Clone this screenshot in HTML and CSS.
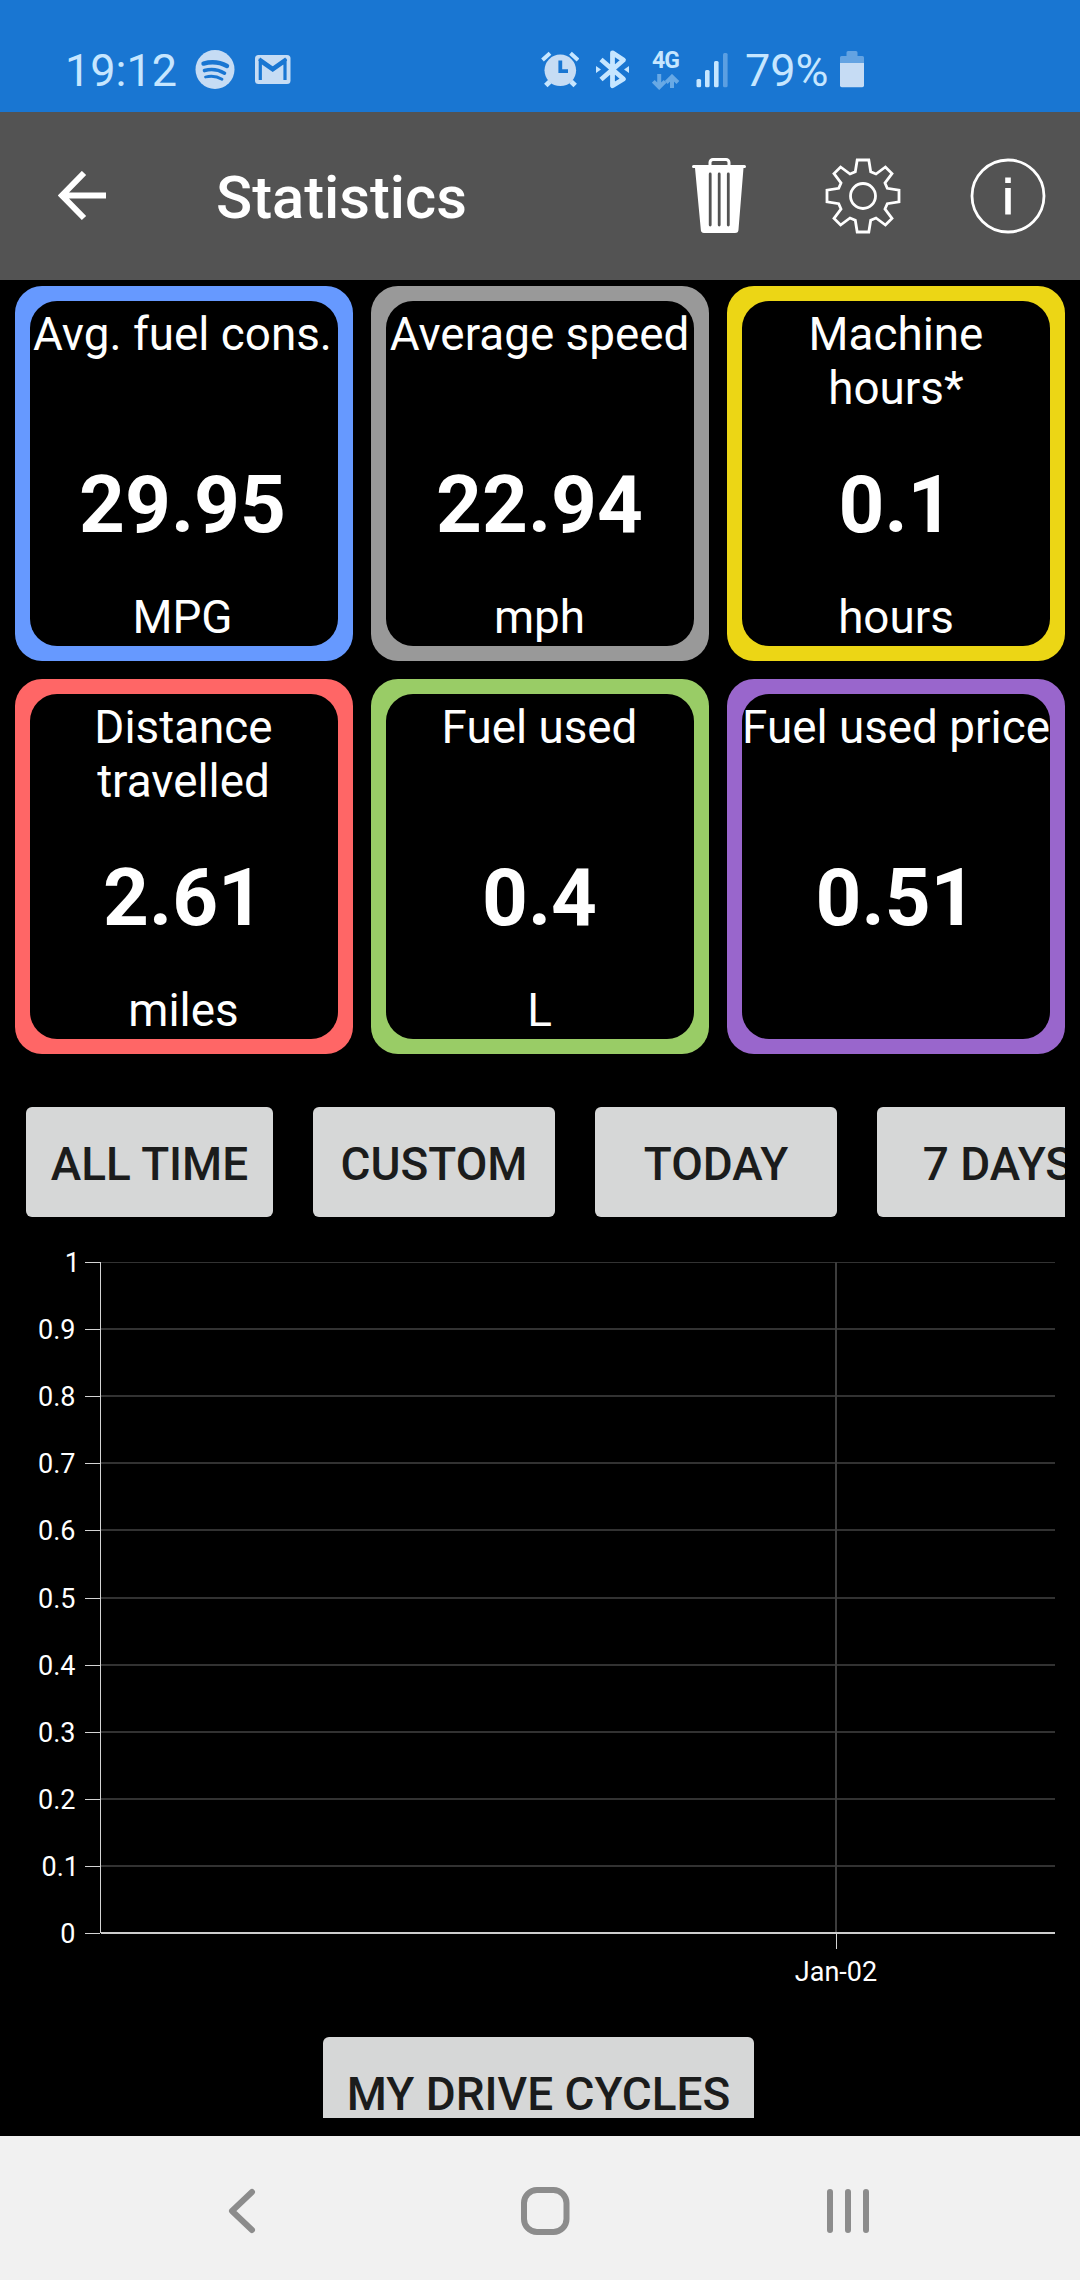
FILE: index.html
```html
<!DOCTYPE html>
<html lang="en">
<head>
<meta charset="utf-8">
<title>Statistics</title>
<link rel="stylesheet" href="styles.css">
</head>
<body>
<div class="screen">
  <div class="status">
    <span class="status-text time">19:12</span>
    <svg class="spotify" width="40" height="40" viewBox="0 0 40 40"><circle cx="20" cy="19.5" r="19.5" fill="#c6dcf4"/><g fill="none" stroke="#1976d2" stroke-linecap="round"><path d="M8.500 13.600Q21 10 32 16" stroke-width="4.400"/><path d="M9.500 20.600Q20 17.600 29.500 23.200" stroke-width="3.600"/><path d="M10.500 27Q19.500 24.800 27 29.200" stroke-width="2.800"/></g></svg>
    <svg class="gmail" width="36" height="40" viewBox="0 0 36 40"><rect y="5" width="35.500" height="29" rx="3.500" fill="#c6dcf4"/><path d="M5.300 30V11.500L17.700 20 30 11.500V30" fill="none" stroke="#1976d2" stroke-width="3.200"/><path d="M4.200 9L17.700 18.500 31.200 9" fill="none" stroke="#1976d2" stroke-width="3.400"/></svg>
    <svg class="alarm" width="38" height="40" viewBox="0 0 38 40"><g fill="none" stroke="#c6e6ff" stroke-width="4"><path d="M1.500 10L9 3.200M37 10L29.500 3.200"/><path d="M9 31.500L4.800 35.500M30 31.500L34.200 35.500" stroke-width="5"/></g><circle cx="19.300" cy="20.300" r="15.800" fill="#c6dcf4"/><path d="M19.300 10.500V21.200H27" fill="none" stroke="#1976d2" stroke-width="3.800"/></svg>
    <svg class="bt" width="34" height="40" viewBox="0 0 34 40"><path d="M5 9.500L27.500 29 16.500 35.800V2.800L27.500 10 5 29.500" fill="none" stroke="#c6e6ff" stroke-width="4.800" stroke-linejoin="round"/><path d="M0 16l5 3.500-5 3.500zM33 16l-5 3.500 5 3.500z" fill="#c6e6ff"/></svg>
    <div class="network">
      <span class="network-type">4G</span>
      <svg width="28" height="16" viewBox="0 0 28 16"><g fill="none" stroke="#68a9e5" stroke-width="4"><path d="M7.200 0V13M1.300 7.300L7.200 13.200 13.100 7.300"/><path d="M20 14V3M14.200 8.500L20 2.700 25.900 8.500"/></g></svg>
    </div>
    <svg class="signal" width="33" height="40" viewBox="0 0 33 40"><g fill="#c6e6ff"><rect x=".5" y="29" width="4.600" height="8.300" rx="1.500"/><rect x="9" y="20" width="4.600" height="17.300" rx="1.500"/><rect x="18" y="11" width="4.600" height="26.300" rx="1.500"/><rect x="27" y="3" width="4.600" height="34.300" rx="1.500" fill="#5b9fe2"/></g></svg>
    <span class="status-text percent">79%</span>
    <svg class="battery" width="24" height="40" viewBox="0 0 24 40"><path d="M6.500 6V2.500a1.500 1.500 0 0 1 1.500-1.500h8a1.500 1.500 0 0 1 1.500 1.500V6h5a1.500 1.500 0 0 1 1.500 1.500V13H0V7.500A1.500 1.500 0 0 1 1.500 6z" fill="#63a3e2"/><path d="M0 13h24v22.500a1.800 1.800 0 0 1-1.800 1.800H1.800A1.800 1.800 0 0 1 0 35.500z" fill="#c6dcf4"/></svg>
  </div>

  <header class="appbar">
    <svg class="back" width="50" height="50" viewBox="0 0 50 50"><path d="M48 24.500H5M26 2L4 24.500 26 47" fill="none" stroke="#fff" stroke-width="6"/></svg>
    <h1 class="title">Statistics</h1>
    <svg class="trash" width="54" height="76" viewBox="0 0 54 76"><path d="M18 8V4.500A3 3 0 0 1 21 1.500H34a3 3 0 0 1 3 3V8" fill="none" stroke="#fff" stroke-width="3"/><path d="M1.500 7H52.500A1.500 1.500 0 0 1 52.500 10H51.500L46.500 71.500A3.500 3.500 0 0 1 43 75H12A3.500 3.500 0 0 1 8.800 71.500L3 10H1.500A1.500 1.500 0 0 1 1.500 7Z" fill="#fff"/><path d="M18.200 16V67M27.200 16V67M36.300 16V67" stroke="#535353" stroke-width="2.800" stroke-linecap="round"/></svg>
    <svg class="gear" width="76" height="76" viewBox="-38 -38 76 76"><g fill="none" stroke="#fff" stroke-width="2.800"><path d="M-5.800-36H5.800L7.700-24.300 13-22 22.400-29 29-22.400 22-13 24.300-7.700 36-5.800V5.800L24.300 7.700 22 13 29 22.400 22.400 29 13 22 7.700 24.300 5.800 36H-5.800L-7.700 24.300-13 22-22.400 29-29 22.400-22 13-24.300 7.700-36 5.800V-5.800L-24.300-7.700-22-13-29-22.400-22.400-29-13-22-7.700-24.300Z"/><circle r="12.500"/></g></svg>
    <svg class="info" width="76" height="76" viewBox="-38 -38 76 76"><circle r="36" fill="none" stroke="#fff" stroke-width="2.800"/><path d="M-2.800-18.500h5.600v5.600h-5.600zM-2.800-8h5.600v26.500h-5.600z" fill="#fff"/></svg>
  </header>

  <main class="content">
    <section class="cards">
      <article class="card blue"><div class="face"><h2>Avg. fuel cons.</h2><strong>29.95</strong><span>MPG</span></div></article>
      <article class="card gray"><div class="face"><h2>Average speed</h2><strong>22.94</strong><span>mph</span></div></article>
      <article class="card yellow"><div class="face"><h2>Machine<br>hours*</h2><strong>0.1</strong><span>hours</span></div></article>
      <article class="card red"><div class="face"><h2>Distance<br>travelled</h2><strong>2.61</strong><span>miles</span></div></article>
      <article class="card green"><div class="face"><h2>Fuel used</h2><strong>0.4</strong><span>L</span></div></article>
      <article class="card purple"><div class="face"><h2>Fuel used price</h2><strong>0.51</strong><span></span></div></article>
    </section>

    <nav class="ranges">
      <button class="btn wide">ALL TIME</button>
      <button class="btn">CUSTOM</button>
      <button class="btn">TODAY</button>
      <button class="btn">7 DAYS</button>
    </nav>

    <svg class="chart" width="1050" height="820" viewBox="15 1217 1050 820">
      <path d="M101 1262.500H1055" stroke="#323232"/>
      <path d="M101 1329H1055M101 1396H1055M101 1463H1055M101 1530H1055M101 1598H1055M101 1665H1055M101 1732H1055M101 1799H1055M101 1866H1055" stroke="#323232" stroke-width="2"/>
      <path d="M836 1262V1932" stroke="#3c3c3c" stroke-width="2"/>
      <path d="M85 1262.500H100M85 1329.500H100M85 1396.500H100M85 1463.500H100M85 1530.500H100M85 1598.500H100M85 1665.500H100M85 1732.500H100M85 1799.500H100M85 1866.500H100M85 1933.500H100M100.500 1262V1933M836.500 1934V1949" stroke="#d4d4d4"/>
      <path d="M101 1933H1055" stroke="#ccc" stroke-width="2"/>
      <g class="y-labels">
        <text x="80" y="1272">1</text>
        <text x="75.500" y="1339">0.9</text>
        <text x="75.500" y="1406">0.8</text>
        <text x="75.500" y="1473">0.7</text>
        <text x="75.500" y="1540">0.6</text>
        <text x="75.500" y="1608">0.5</text>
        <text x="75.500" y="1675">0.4</text>
        <text x="75.500" y="1742">0.3</text>
        <text x="75.500" y="1809">0.2</text>
        <text x="79" y="1876">0.1</text>
        <text x="75.500" y="1943">0</text>
      </g>
      <text class="x-label" x="836" y="1981">Jan-02</text>
    </svg>

    <button class="btn cycles">MY DRIVE CYCLES</button>
  </main>

  <footer class="navbar">
    <svg width="30" height="50" viewBox="0 0 30 50"><path d="M25 6L5 25 25 44" fill="none" stroke="#8c8c8c" stroke-width="6" stroke-linecap="round" stroke-linejoin="round"/></svg>
    <svg width="50" height="50" viewBox="0 0 50 50"><rect x="4" y="4" width="42.500" height="42" rx="13" fill="none" stroke="#8c8c8c" stroke-width="6"/></svg>
    <svg width="44" height="50" viewBox="0 0 44 50"><path d="M4 6V44M22 6V44M40 6V44" stroke="#8c8c8c" stroke-width="6" stroke-linecap="round"/></svg>
  </footer>
</div>
</body>
</html>
```
FILE: styles.css
```css
* { box-sizing: border-box; }

body {
  margin: 0;
  background: #000;
  font-family: Roboto, "Liberation Sans", sans-serif;
}

svg { display: block; flex: none; }

.screen {
  display: flex;
  flex-direction: column;
  width: 1080px;
  height: 2280px;
  overflow: hidden;
}

.status {
  display: flex;
  align-items: flex-start;
  height: 112px;
  padding: 50px 0 0 65px;
  background: #1976d2;
}

.status-text {
  font-size: 45px;
  line-height: 42px;
  color: #c6e6ff;
  white-space: nowrap;
}

.time { width: 130px; }
.percent { width: 82px; margin-left: 16px; }
.gmail { margin-left: 20px; }
.alarm { margin-left: 250px; }
.bt { margin-left: 17px; }

.network {
  display: flex;
  flex-direction: column;
  width: 28px;
  margin-left: 22px;
}

.network-type {
  height: 24px;
  font-size: 23px;
  font-weight: 700;
  line-height: 22px;
  letter-spacing: -1px;
  color: #c6e6ff;
}

.signal { margin-left: 16px; }
.battery { margin-left: 13px; }

.appbar {
  display: flex;
  align-items: center;
  height: 168px;
  padding: 0 34px 0 58px;
  background: #535353;
}

.title {
  flex: 1;
  margin: 4px 0 0 108px;
  font-size: 59.7px;
  font-weight: 500;
  line-height: 70px;
  color: #fff;
}

.gear { margin-left: 79px; }
.info { margin-left: 69px; }

.content {
  display: flex;
  flex-direction: column;
  height: 1838px;
  margin: 0 15px 18px;
  padding-top: 6px;
  overflow: hidden;
}

.cards {
  display: grid;
  grid-template-columns: repeat(3, 338px);
  grid-auto-rows: 375px;
  gap: 18px;
}

.card {
  padding: 15px;
  border-radius: 27px;
}

.blue { background: #6699ff; }
.gray { background: #999; }
.yellow { background: #ecd615; }
.red { background: #ff6666; }
.green { background: #99cc66; }
.purple { background: #9966cc; }

.face {
  display: flex;
  flex-direction: column;
  align-items: center;
  height: 345px;
  border-radius: 27px;
  background: #000;
  color: #fff;
  font-size: 45.8px;
  line-height: 54px;
  text-align: center;
  white-space: nowrap;
}

.blue .face { padding-right: 3px; }
.red .face, .gray .face, .green .face { padding-right: 1px; }

.face h2 {
  height: 156px;
  margin: 7px 0 0;
  font-size: inherit;
  font-weight: 400;
}

.face strong {
  height: 127px;
  font-size: 80px;
  font-weight: 700;
  line-height: 82px;
}

.ranges {
  display: flex;
  flex: none;
  gap: 40px;
  margin-top: 53px;
  padding-left: 11px;
}

.btn {
  flex: none;
  width: 242px;
  height: 110px;
  padding: 4px 0 0;
  border: 0;
  border-radius: 6px;
  background: #d6d7d7;
  color: #1b1c1c;
  font: 500 45.9px/106px Roboto, "Liberation Sans", sans-serif;
  white-space: nowrap;
}

.wide { width: 247px; }

.chart text {
  fill: #fff;
  font-size: 27px;
}

.y-labels { text-anchor: end; }
.x-label { text-anchor: middle; }

.cycles {
  width: 431px;
  margin-left: 308px;
}

.navbar {
  display: flex;
  align-items: center;
  height: 144px;
  padding: 6px 0 0 227px;
  background: #f1f1f1;
}

.navbar svg + svg { margin-left: 263px; }
.navbar svg:last-child { margin-left: 256px; }
```
